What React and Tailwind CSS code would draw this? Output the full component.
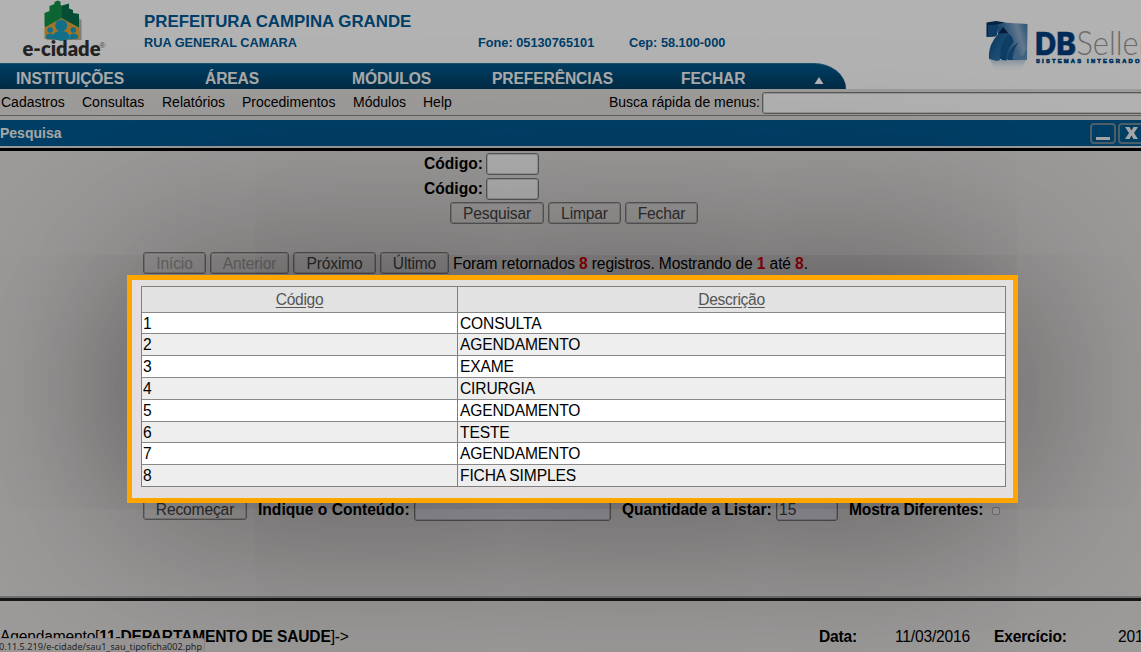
const rows = ['CONSULTA', 'AGENDAMENTO', 'EXAME', 'CIRURGIA', 'AGENDAMENTO', 'TESTE', 'AGENDAMENTO', 'FICHA SIMPLES'];

function Btn({ w, children, disabled }) {
  return (
    <button className={`h-[22px] shrink-0 rounded-[3px] border border-[#858382] bg-[#e3dfde]/40 pt-[1px] text-[15.600px] leading-[20px] tracking-[-0.15px] shadow-[inset_0_0_0_1px_rgba(0,0,0,0.16)] ${disabled ? 'text-[#a5a1a0]' : 'text-[#444]'} ${w}`}>
      {children}
    </button>
  );
}

function Field({ className, children }) {
  return (
    <div className={`shrink-0 rounded-[3px] border border-[#807e7e] shadow-[inset_0_0_0_1px_rgba(0,0,0,0.16)] ${className}`}>{children}</div>
  );
}

function CityLogo() {
  return (
    <svg className="ml-[20px] h-[63px] w-[90px] shrink-0" viewBox="20 0 90 63">
      <path d="M47 40h34.500V20L63 9 47 22Z" fill="#44484a" opacity=".4" />
      <path d="M44.500 25V13l5-2V6l5-2V2l3-1.500 3 1v3l2 2v8l3-2v13l-19 10Z" fill="#109048" />
      <path d="M62 23V5.500l7-2v5l4 1.500v3l6 1v17L62 23Z" fill="#08704c" />
      <path d="M44.500 27.500 61.500 18 79 27.500V39l-17 1-17.500-1Z" fill="#e2a83c" />
      <circle cx="61.200" cy="25.500" r="6" fill="#1a9fc4" />
      <path d="M53.500 39v-4q1-4 7.700-4t7.800 4v4l-7.800 2Z" fill="#1a9fc4" />
      <circle cx="50.200" cy="30" r="2.700" fill="#1a9fc4" />
      <circle cx="73.300" cy="30" r="2.700" fill="#1a9fc4" />
      <path d="M46 38.500v-3q4-4 8 0v4Zm23.500 1v-4q4-4 8.500 0v3Z" fill="#1a9fc4" />
      <text x="22.500" y="56" fontFamily="Lato, sans-serif" fontWeight="800" fontSize="20" textLength="78" lengthAdjust="spacingAndGlyphs" fill="#333">e-cidade</text>
      <text x="99.500" y="48" fontFamily="Liberation Sans, sans-serif" fontSize="8" fill="#666">®</text>
    </svg>
  );
}

function SellerLogo() {
  return (
    <svg className="mt-[14px] h-[64px] w-[161px] shrink-0" viewBox="980 14 161 64">
      <defs>
        <linearGradient id="cube" x1="0" y1="0.6" x2="1" y2="0.3">
          <stop offset="0" stopColor="#0d568f" />
          <stop offset=".4" stopColor="#2a6ba2" />
          <stop offset=".8" stopColor="#8eaccb" />
          <stop offset="1" stopColor="#4c82b0" />
        </linearGradient>
        <linearGradient id="body" x1="0" y1="0" x2="1" y2="1">
          <stop offset="0" stopColor="#0b4a84" />
          <stop offset="1" stopColor="#3d85ba" />
        </linearGradient>
        <linearGradient id="fade" x1="0" y1="0" x2="0" y2="1">
          <stop offset="0" stopColor="#7da5c5" stopOpacity=".5" />
          <stop offset="1" stopColor="#fff" stopOpacity="0" />
        </linearGradient>
      </defs>
      <path d="M990 60h36l-6 12h-24Z" fill="url(#fade)" />
      <path d="M996 22l31.500 2-.5 36-16 0-22-2 5-14 4-9Z" fill="url(#cube)" />
      <path d="M986.500 22.500l9.500-1.500 9 1.500-8 2-1.500 12-9 .5Z" fill="#06315f" />
      <path d="M988 25l10-.500-1 11-9 1Z" fill="#16588f" />
      <path d="M998.500 33.500l4.500-6.500 5.500 6.500Z" fill="#06264e" />
      <path d="M998.500 33.500h10q-8 10-9 18-.5 5 .5 8.500l-3 1-8-2q-.500-8 2-14t7.500-11.500Z" fill="url(#body)" />
      <path d="M1008.500 34q-10 10-7 26l5 .5q-1-10 7-18 0-6-5-8.500Z" fill="#155a93" />
      <path d="M1019 42q-11 6-11 18h4q1-11 7-18Z" fill="#1a5d94" />
      <path d="M1013 59q1-7 5-9 1 6 4 6 3-1 3-6l2 1v8.500Z" fill="#5b90ba" />
      <text x="1035" y="54.500" fontFamily="Inter, sans-serif" fontWeight="800" fontSize="31" textLength="41" lengthAdjust="spacingAndGlyphs" fill="#003e80" stroke="#003e80" strokeWidth=".5">DB</text>
      <text x="1076.500" y="54.500" fontFamily="Lato, sans-serif" fontWeight="300" fontSize="34" textLength="73" lengthAdjust="spacingAndGlyphs" fill="#9a9a9a">Seller</text>
      <text x="1036" y="62.600" fontFamily="Liberation Sans, sans-serif" fontWeight="700" fontSize="5.800" textLength="103.500" lengthAdjust="spacing" fill="#004a86" stroke="#004a86" strokeWidth=".6">SISTEMAS INTEGRADO</text>
    </svg>
  );
}

export default function App() {
  return (
    <div className="relative flex h-[652px] w-[1141px] flex-col overflow-hidden bg-[#e3dfde] font-['Liberation_Sans',sans-serif] whitespace-nowrap text-black">
      <div className="flex h-[92px] shrink-0 bg-white">
        <div className="flex w-[980px] shrink-0 flex-col">
          <header className="flex h-[63px] shrink-0">
            <CityLogo />
            <div className="ml-[34px] flex flex-col font-bold text-[#005a96]">
              <div className="mt-[12px] h-[20px] text-[16.850px] leading-[20px]">PREFEITURA CAMPINA GRANDE</div>
              <div className="mt-[3px] flex h-[16px] text-[12.750px] leading-[16px]">
                <span className="w-[334px]">RUA GENERAL CAMARA</span>
                <span className="w-[151px]">Fone: 05130765101</span>
                <span>Cep: 58.100-000</span>
              </div>
            </div>
          </header>
          <nav className="flex h-[26px] w-[846px] rounded-tr-[32px_26px] border-t border-[#2a7399] bg-linear-to-b from-[#005a8e] to-[#003f63] pl-[16px] text-[15.600px] leading-[30px] font-bold tracking-[-0.1px] text-[#f4f4f4]">
            <span className="w-[189px]">INSTITUIÇÕES</span>
            <span className="w-[147px]">ÁREAS</span>
            <span className="w-[140px]">MÓDULOS</span>
            <span className="w-[189px]">PREFERÊNCIAS</span>
            <span className="w-[133px]">FECHAR</span>
            <svg className="mt-[13px] h-[7px] w-[10px]" viewBox="0 0 10 7"><path d="M5 0l4.500 7h-9Z" fill="#fff" /></svg>
          </nav>
          <div className="h-[3px] bg-[#e3dfde]" />
        </div>
        <div className="flex w-[161px] flex-col"><div className="h-[89px]"><SellerLogo /></div><div className="h-[3px] bg-[#e3dfde]" /></div>
      </div>
      <div className="flex h-[24px] shrink-0 items-center border-b border-[#8a8888] pb-[2px] pl-[1px] text-[14px] *:shrink-0">
        <span className="w-[81px]">Cadastros</span>
        <span className="w-[80px]">Consultas</span>
        <span className="w-[80px]">Relatórios</span>
        <span className="w-[111px]">Procedimentos</span>
        <span className="w-[70px]">Módulos</span>
        <span className="w-[186px]">Help</span>
        <span className="w-[153px]">Busca rápida de menus:</span>
        <Field className="h-[22px] w-[390px] bg-white" />
      </div>
      <div className="mt-[4px] flex h-[26px] shrink-0 items-center bg-[#005b94] text-[14px] font-bold text-[#f0f0f0]">
        <span className="w-[1090px] shrink-0">Pesquisa</span>
        <div className="flex h-[21px] w-[26px] shrink-0 items-end justify-center rounded-[4px] border-2 border-[#718996] pb-[2px]"><div className="h-[3px] w-[14px] bg-[#eee]" /></div>
        <div className="ml-[2px] flex h-[21px] w-[26px] shrink-0 items-center justify-center rounded-[4px] border-2 border-[#718996]">
          <svg className="h-[12px] w-[13px]" viewBox="0 0 13 12"><path d="M0 0h4.500l2 3.500L8.500 0H13L9 6l4 6H8.500l-2-3.500-2 3.500H0l4-6Z" fill="#eee" /></svg>
        </div>
      </div>
      <div className="mt-[2px] h-[3px] shrink-0 bg-black" />
      <main className="flex h-[445px] shrink-0 flex-col">
        <div className="mt-[2px] flex h-[22px] items-center pl-[424px] text-[15.600px] font-bold"><span className="w-[62px]">Código:</span><Field className="h-[22px] w-[53px] bg-white" /></div>
        <div className="mt-[2px] flex h-[23px] items-center pl-[424px] text-[15.600px] font-bold"><span className="w-[62px]">Código:</span><Field className="h-[22px] w-[53px] bg-white" /></div>
        <div className="mt-[2px] flex h-[22px] gap-[4px] pl-[450px]">
          <Btn w="w-[94px]">Pesquisar</Btn><Btn w="w-[73px]">Limpar</Btn><Btn w="w-[73px]">Fechar</Btn>
        </div>
        <div className="mt-[28px] flex h-[22px] items-center gap-[4px] pl-[143px]">
          <Btn w="w-[63px]" disabled>Início</Btn><Btn w="w-[79px]" disabled>Anterior</Btn><Btn w="w-[83px]">Próximo</Btn><Btn w="w-[69px]">Último</Btn>
          <span className="pt-[1px] text-[15.600px] tracking-[-0.13px]">Foram retornados <b className="text-[#e8000c]">8</b> registros. Mostrando de <b className="text-[#e8000c]">1</b> até <b className="text-[#e8000c]">8</b>.</span>
        </div>
        <div className="mt-[12px] ml-[141px] flex h-[201px] w-[865px] shrink-0 flex-col border border-[#7f7f7f] text-[15.600px] tracking-[-0.15px]">
          <div className="flex h-[25.500px] shrink-0 border-b border-[#888] bg-[#e2e2e2] text-[#555]">
            <div className="flex w-[316px] items-center justify-center border-r border-[#7f7f7f] tracking-[-0.3px] underline underline-offset-2">Código</div>
            <div className="flex flex-1 items-center justify-center tracking-[-0.3px] underline underline-offset-2">Descrição</div>
          </div>
          {rows.map((r, i) => (
            <div key={i} className={`flex min-h-0 flex-1 leading-[22px] ${i < 7 ? 'border-b border-[#888]' : ''} ${i % 2 ? 'bg-[#eee]' : 'bg-white'}`}>
              <div className="w-[316px] border-r border-[#7f7f7f] pl-[1px]">{i + 1}</div>
              <div className="pl-[2px]">{r}</div>
            </div>
          ))}
        </div>
        <div className="mt-[11px] flex h-[23px] shrink-0 items-center pl-[143px] text-[15.600px] font-bold">
          <div className="-mt-[2px] flex w-[115px] font-normal"><Btn w="w-[104px]">Recomeçar</Btn></div>
          <span className="w-[156px]">Indique o Conteúdo:</span>
          <Field className="h-[23px] w-[197px] bg-[#e6e6f0]" />
          <span className="ml-[11px] w-[154px] tracking-[-0.06px]">Quantidade a Listar:</span>
          <Field className="h-[23px] w-[62px] bg-[#e6e6f0] pl-[2px] leading-[21px] font-normal text-[#444]">15</Field>
          <span className="ml-[11px] w-[143px] tracking-[-0.14px]">Mostra Diferentes:</span>
          <div className="mt-[3px] h-[8px] w-[8px] rounded-[2px] border border-[#aaa] bg-[#eee]" />
        </div>
      </main>
      <div className="h-[2px] shrink-0 bg-[#a4a2a2]" />
      <div className="h-[3px] shrink-0 bg-[#222]" />
      <footer className="flex h-[51px] shrink-0 items-center pt-[20px] text-[15.600px] tracking-[-0.18px] *:shrink-0">
        <span className="w-[819px]">Agendamento[<b>11-DEPARTAMENTO DE SAUDE</b>]-&gt;</span>
        <b className="w-[76px]">Data:</b>
        <span className="w-[99px]">11/03/2016</span>
        <b className="w-[124px]">Exercício:</b>
        <span>2016</span>
      </footer>
      <div className="absolute bottom-0 left-0 h-[14px] w-[205px] overflow-hidden rounded-tr-[3px] border-t border-r border-[#c9c5c4] bg-[#dedad9] text-[#333]">
        <svg className="h-[14px] w-[205px]"><text x="-1" y="10.500" fontFamily="Noto Sans, sans-serif" fontSize="9.800" textLength="203" lengthAdjust="spacingAndGlyphs" fill="#333">0.11.5.219/e-cidade/sau1_sau_tipoficha002.php</text></svg>
      </div>
      <div className="pointer-events-none absolute top-[275px] left-[127px] h-[228px] w-[891px] border-[5px] border-[#ffa500] shadow-[0_0_200px_rgba(0,0,0,0.6),0_0_0_1200px_rgba(0,0,0,0.3)]" />
    </div>
  );
}
